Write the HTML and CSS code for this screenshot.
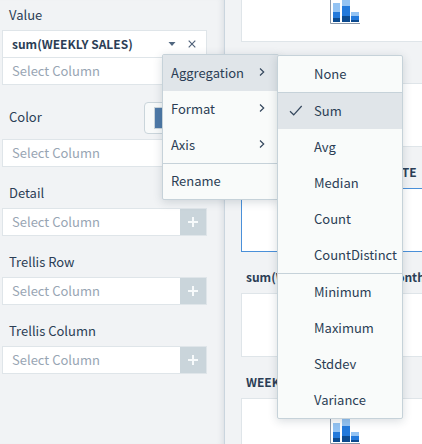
FILE: index.html
```html
<!DOCTYPE html>
<html lang="en">
<head>
    <meta charset="UTF-8">
    <meta name="viewport" content="width=device-width, initial-scale=1.0">
    <title>Chart Editor</title>
    <link rel="stylesheet" href="styles.css">
</head>
<body>
    <div class="editor">
        <!-- Column pickers -->
        <aside class="sidebar">
            <div class="field">
                <div class="field-header"><label for="value">Value</label></div>
                <div class="picker selected">
                    <span class="column-name">sum(WEEKLY SALES)</span>
                    <button class="icon-button" aria-label="Options">
                        <svg width="8" height="4" viewBox="0 0 8 4"><path d="M0.5 0h7L4 4z" fill="#50667f"/></svg>
                    </button>
                    <button class="icon-button" aria-label="Remove">
                        <svg width="8" height="8" viewBox="0 0 8 8"><path d="M0.7 0.7l6.6 6.6M7.3 0.7L0.7 7.3" stroke="#50627a" stroke-width="1.2"/></svg>
                    </button>

                    <!-- Options menu -->
                    <div class="menu options-menu">
                        <button class="menu-item active">Aggregation <svg class="chevron" width="6" height="8" viewBox="0 0 6 8"><path d="M1 0.5L4.7 4 1 7.5"/></svg></button>
                        <button class="menu-item">Format <svg class="chevron" width="6" height="8" viewBox="0 0 6 8"><path d="M1 0.5L4.7 4 1 7.5"/></svg></button>
                        <button class="menu-item">Axis <svg class="chevron" width="6" height="8" viewBox="0 0 6 8"><path d="M1 0.5L4.7 4 1 7.5"/></svg></button>
                        <button class="menu-item rename">Rename</button>

                        <div class="menu submenu">
                            <button class="menu-item">None</button>
                            <hr>
                            <button class="menu-item active">
                                <svg class="check" width="14" height="11" viewBox="0 0 14 11"><path d="M1 6.3l3.7 3.5L12.7 1"/></svg>
                                Sum
                            </button>
                            <button class="menu-item">Avg</button>
                            <button class="menu-item">Median</button>
                            <button class="menu-item">Count</button>
                            <button class="menu-item">CountDistinct</button>
                            <hr>
                            <button class="menu-item">Minimum</button>
                            <button class="menu-item">Maximum</button>
                            <button class="menu-item">Stddev</button>
                            <button class="menu-item">Variance</button>
                        </div>
                    </div>
                </div>
                <div class="picker stacked">
                    <input id="value" type="text" placeholder="Select Column">
                    <button class="add" aria-label="Add value"></button>
                </div>
            </div>

            <div class="field">
                <div class="field-header tall">
                    <label for="color">Color</label>
                    <button class="color-button" aria-label="Pick color"><span class="swatch"></span></button>
                </div>
                <div class="picker">
                    <input id="color" type="text" placeholder="Select Column">
                    <button class="add" aria-label="Add color"></button>
                </div>
            </div>

            <div class="field">
                <div class="field-header"><label for="detail">Detail</label></div>
                <div class="picker">
                    <input id="detail" type="text" placeholder="Select Column">
                    <button class="add" aria-label="Add detail"></button>
                </div>
            </div>

            <div class="field">
                <div class="field-header"><label for="trellisRow">Trellis Row</label></div>
                <div class="picker">
                    <input id="trellisRow" type="text" placeholder="Select Column">
                    <button class="add" aria-label="Add trellis row"></button>
                </div>
            </div>

            <div class="field">
                <div class="field-header"><label for="trellisColumn">Trellis Column</label></div>
                <div class="picker">
                    <input id="trellisColumn" type="text" placeholder="Select Column">
                    <button class="add" aria-label="Add trellis column"></button>
                </div>
            </div>
        </aside>

        <!-- Chart previews -->
        <main class="charts">
            <section>
                <div class="card">
                    <svg class="chart-icon" width="30" height="30" viewBox="0 0 30 30">
                        <path d="M0.5 0v29.5H30" fill="none" stroke="#8896a8"/>
                        <path d="M3 9h7v9H3zM12 5h8v7h-8zM21 18h8v4h-8z" fill="#93c3f3"/>
                        <path d="M3 18h7v6H3zM12 12h8v10h-8zM21 22h8v4h-8z" fill="#2279db"/>
                        <path d="M3 24h7v4H3zM12 22h8v6h-8zM21 26h8v2h-8z" fill="#0b4a8f"/>
                    </svg>
                </div>
                <div class="chart-title"></div>
            </section>
            <section>
                <div class="card"></div>
                <div class="chart-title">sum(WEEKLY SALES) by DATE</div>
            </section>
            <section>
                <div class="card current"></div>
                <div class="chart-title">sum(WEEKLY SALES) by Month</div>
            </section>
            <section>
                <div class="card"></div>
                <div class="chart-title">WEEKLY SALES</div>
            </section>
            <section>
                <div class="card">
                    <svg class="chart-icon" width="30" height="30" viewBox="0 0 30 30">
                        <path d="M0.5 0v29.5H30" fill="none" stroke="#8896a8"/>
                        <path d="M3 9h7v9H3zM12 5h8v7h-8zM21 18h8v4h-8z" fill="#93c3f3"/>
                        <path d="M3 18h7v6H3zM12 12h8v10h-8zM21 22h8v4h-8z" fill="#2279db"/>
                        <path d="M3 24h7v4H3zM12 22h8v6h-8zM21 26h8v2h-8z" fill="#0b4a8f"/>
                    </svg>
                </div>
            </section>
        </main>
    </div>
</body>
</html>
```
FILE: styles.css
```css
* {
    box-sizing: border-box;
}

body {
    margin: 0;
    background-color: #f1f3f5;
    color: #2b3e55;
    font-family: "Noto Sans CJK SC", "Noto Sans", sans-serif;
    font-size: 13px;
}

button, input {
    font: inherit;
    color: inherit;
    border: 0;
    padding: 0;
    background: none;
}

.editor {
    display: flex;
    height: 100vh;
    overflow: hidden;
}

/* Sidebar */
.sidebar {
    flex: 0 0 225px;
    padding: 0 17px 0 2px;
    border-right: 1px solid #cad5de;
    box-shadow: inset -6px 0 6px -5px rgba(40, 60, 80, 0.12);
}

.field {
    margin-bottom: 11px;
}

.field-header {
    display: flex;
    align-items: center;
    justify-content: space-between;
    height: 30px;
    padding: 0 7px;
}

.field-header label {
    padding-bottom: 2px;
}

.field-header.tall {
    height: 43px;
}

.picker {
    position: relative;
    display: flex;
    height: 28px;
    background-color: white;
    border: 1px solid #dfe5e9;
}

.picker.stacked {
    border-top: 0;
    height: 27px;
}

.picker input {
    flex: 1;
    min-width: 0;
    padding: 0 0 2px 9px;
    outline: none;
}

.picker input::placeholder {
    color: #98a5b3;
    opacity: 1;
}

.picker.selected {
    align-items: center;
    padding-right: 10px;
    gap: 12px;
}

.column-name {
    flex: 1;
    padding: 0 0 2px 9px;
    font-size: 12px;
    font-weight: bold;
    white-space: nowrap;
}

.icon-button {
    display: flex;
}

.add {
    width: 26px;
    background: linear-gradient(#f7fafb, #f7fafb) center / 10px 2px no-repeat,
        linear-gradient(#f7fafb, #f7fafb) center / 2px 10px no-repeat,
        #cad5db;
}

.color-button {
    display: flex;
    align-items: center;
    justify-content: center;
    width: 40px;
    height: 32px;
    margin-right: 16px;
    background-color: #f8fafa;
    border: 1px solid #cad5db;
    border-radius: 4px;
}

.swatch {
    width: 21px;
    height: 22px;
    background-color: #4e79a7;
    border: 1px solid #cad5db;
}

/* Menus */
.menu {
    position: absolute;
    z-index: 10;
    background-color: #f9fbfa;
    border: 1px solid #c6d2d9;
    border-radius: 2px;
    box-shadow: 0 2px 10px rgba(40, 60, 80, 0.18);
}

.options-menu {
    top: 23px;
    left: 159px;
    width: 117px;
}

.submenu {
    top: 0;
    left: 114px;
    width: 126px;
}

.menu-item {
    display: flex;
    align-items: center;
    justify-content: space-between;
    width: 100%;
    height: 36px;
    padding: 0 13px 2px 8px;
    white-space: nowrap;
}

.menu-item.active {
    background-color: #e0e5e9;
}

.menu-item.rename {
    border-top: 1px solid #c6d2d9;
}

.submenu .menu-item {
    position: relative;
    justify-content: flex-start;
    padding: 0 0 2px 36px;
}

.menu hr {
    height: 1px;
    margin: 0;
    border: 0;
    background-color: #c6d2d9;
}

.chevron, .check {
    fill: none;
    stroke: #34475d;
    stroke-width: 1.2;
}

.check {
    position: absolute;
    left: 11px;
}

/* Chart list, scrolled part way down */
.charts {
    flex: 1 0 197px;
    min-width: 0;
    margin-top: -22px;
    padding-left: 16px;
}

.card {
    display: flex;
    justify-content: center;
    width: 208px;
    min-width: 100%;
    height: 64px;
    padding-top: 15px;
    background-color: white;
    border: 1px solid #dfe5e9;
}

.card.current {
    border-color: #4a90d9;
}

.chart-title {
    height: 41px;
    padding: 0 5px;
    font-size: 12px;
    font-weight: bold;
    line-height: 50px;
    white-space: nowrap;
}
```
